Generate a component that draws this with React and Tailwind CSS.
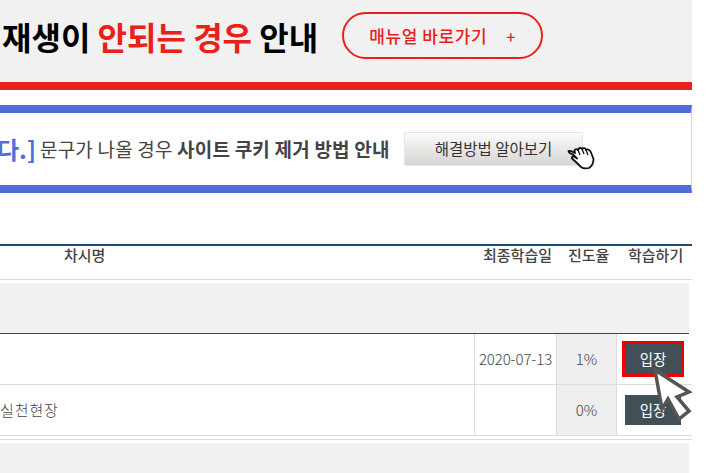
import React from 'react';

const KR = '[font-family:"Noto_Sans_CJK_KR","Noto_Sans",sans-serif]';

const HandIcon = () => (
  <svg width="28" height="25" viewBox="0 0 28 25" className="-ml-[16px] mt-[17px] shrink-0 z-10">
    <path
      d="M1.5 6 C3 5 5 6.500 8 8 L7.500 5.500 C8.500 3.500 10 4 11 5 C12 2.500 14 2.500 15 4 C16.500 2.500 18.500 3 19 5 C21 3.500 23 5 24 7.500 L26.500 14 C26.500 18 25 21 22 23 C18 24 16 23.500 14 22 L9 17 L5 13.500 C4.500 11.500 6 11 8 12 L10 13.500 L6 9.500 C4 9 2 8 1.500 6 Z"
      fill="#fff"
      stroke="#111"
      strokeWidth="1.800"
      strokeLinejoin="round"
    />
    <path d="M11 5 L13 10 M15 4 L17 9 M19 5 L21 10" stroke="#111" strokeWidth="1.300" fill="none" />
  </svg>
);

const ArrowCursor = () => (
  <svg width="48" height="62" viewBox="0 0 48 62" className="absolute left-[650px] top-[364px] z-10">
    <path
      d="M5 6 L39 28 L27 33 L39 47 L29 55 L18 35 L12 45 Z"
      fill="#fff"
      stroke="#555"
      strokeWidth="3.500"
      strokeLinejoin="miter"
    />
  </svg>
);

const Row = ({ title, date, rate, button }) => (
  <div className="flex h-[51px] border-b border-[#dcdcdc] text-[15px] text-[#444] font-light">
    <div className="w-[475px] border-r border-[#dcdcdc] flex items-center whitespace-nowrap tracking-[0.9px]">{title}</div>
    <div className="w-[82px] border-r border-[#dcdcdc] flex items-center justify-center tracking-[-0.1px]">{date}</div>
    <div className="w-[60px] border-r border-[#dcdcdc] bg-[#eeeeee] flex items-center justify-center">{rate}</div>
    <div className="w-[72px] flex items-center justify-center">{button}</div>
  </div>
);

export default function App() {
  return (
    <div className={`relative w-[710px] h-[473px] overflow-hidden bg-white ${KR}`}>
      <div className="w-[692px]">
        {/* red banner */}
        <div className="h-[90px] bg-[#f2f2f2] bg-[radial-gradient(#ececec_1px,transparent_1px)] bg-[size:3px_3px] border-b-[8px] border-[#e8211a] flex items-center pl-[2px] pb-[11px]">
          <h1 className="text-[32px] font-bold text-black whitespace-nowrap">
            재생이 <span className="text-[#e8211a]">안되는 경우</span> 안내
          </h1>
          <a className="ml-[24px] w-[201px] h-[47px] shrink-0 rounded-full border-2 border-[#e8211a] text-[#e8211a] text-[17px] tracking-[0.6px] font-medium flex items-center pl-[25px] whitespace-nowrap">
            매뉴얼 바로가기
            <span className="ml-[19px] text-[16px]">+</span>
          </a>
        </div>

        {/* blue notice */}
        <div className="mt-[15px] h-[88px] border-y-[8px] border-[#516cdb] border-r border-r-[#d9d9d9] flex items-center whitespace-nowrap">
          <span className="-ml-[3px] text-[24px] font-bold text-[#516cdb]">다.]</span>
          <span className="ml-[4px] text-[19px] text-[#444] tracking-[0.2px]">
            문구가 나올 경우 <b className="font-bold">사이트 쿠키 제거 방법 안내</b>
          </span>
          <a className="ml-[14px] w-[179px] h-[34px] shrink-0 rounded-[2px] border border-[#e6e6e6] bg-gradient-to-b from-[#fbfbfb] to-[#d8d5d2] text-[15.5px] text-[#333] flex items-center pl-[30px]">
            해결방법 알아보기
          </a>
          <HandIcon />
        </div>

        {/* table */}
        <div className="mt-[51px] border-t-2 border-[#1c4b75]">
          <div className="flex h-[34px] border-b border-[#d8dcdc] text-[15px] text-[#444] font-medium leading-[18px]">
            <div className="w-[483px] pl-[64px]">차시명</div>
            <div className="w-[85px]">최종학습일</div>
            <div className="w-[60px]">진도율</div>
            <div>학습하기</div>
          </div>
          <div className="mt-[3px] w-[689px] h-[50px] bg-[#f1f1f1] border-b border-[#444] box-content" />
          <Row
            title=""
            date="2020-07-13"
            rate="1%"
            button={
              <a className="w-[62px] h-[36px] border-[3px] border-[#f00000] bg-[#434f57] text-white text-[14.5px] font-normal flex items-center justify-center">
                입장
              </a>
            }
          />
          <Row
            title="실천현장"
            date=""
            rate="0%"
            button={
              <a className="w-[56px] h-[30px] bg-[#434f57] text-white text-[14.5px] font-normal flex items-center justify-center">
                입장
              </a>
            }
          />
          <div className="mt-[3px] border-t border-[#dcdcdc]" />
          <div className="mt-[3px] w-[689px] h-[40px] bg-[#f1f1f1]" />
        </div>
      </div>
      <ArrowCursor />
    </div>
  );
}
